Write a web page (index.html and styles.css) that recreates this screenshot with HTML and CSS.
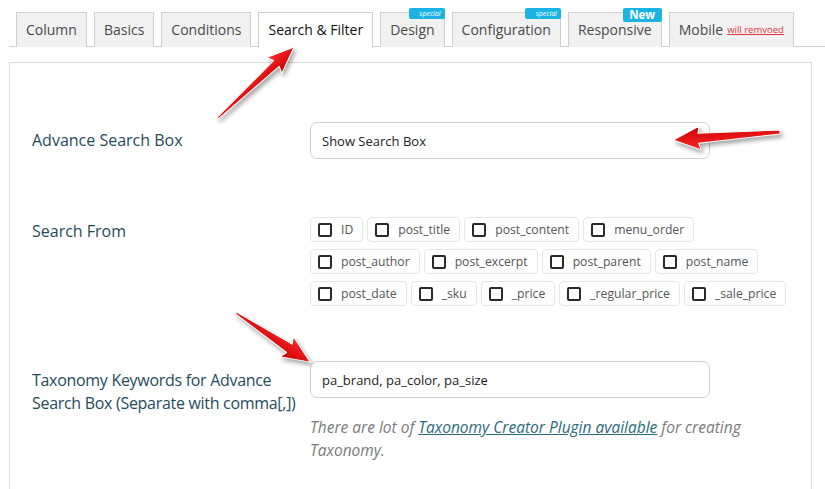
FILE: index.html
```html
<!DOCTYPE html>
<html>
<head>
<meta charset="utf-8">
<link rel="stylesheet" href="styles.css">
</head>
<body>
<div class="page">
  <nav class="tabs">
    <div class="tab">Column</div>
    <div class="tab">Basics</div>
    <div class="tab">Conditions</div>
    <div class="tab active">Search &amp; Filter</div>
    <div class="tab">Design<span class="badge small">special</span></div>
    <div class="tab">Configuration<span class="badge small">special</span></div>
    <div class="tab">Responsive<span class="badge new">New</span></div>
    <div class="tab">Mobile <a class="removed">will remvoed</a></div>
  </nav>

  <section class="panel">
    <div class="row row-select">
      <div class="label">Advance Search Box</div>
      <div class="control"><div class="select">Show Search Box</div></div>
    </div>

    <div class="row row-checks">
      <div class="label">Search From</div>
      <div class="control chips">
        <div class="chip-row">
          <label class="chip"><span class="box"></span>ID</label>
          <label class="chip"><span class="box"></span>post_title</label>
          <label class="chip"><span class="box"></span>post_content</label>
          <label class="chip"><span class="box"></span>menu_order</label>
        </div>
        <div class="chip-row">
          <label class="chip"><span class="box"></span>post_author</label>
          <label class="chip"><span class="box"></span>post_excerpt</label>
          <label class="chip"><span class="box"></span>post_parent</label>
          <label class="chip"><span class="box"></span>post_name</label>
        </div>
        <div class="chip-row">
          <label class="chip"><span class="box"></span>post_date</label>
          <label class="chip"><span class="box"></span>_sku</label>
          <label class="chip"><span class="box"></span>_price</label>
          <label class="chip"><span class="box"></span>_regular_price</label>
          <label class="chip"><span class="box"></span>_sale_price</label>
        </div>
      </div>
    </div>

    <div class="row row-tax">
      <div class="label">Taxonomy Keywords for Advance<br>Search Box (Separate with comma[,])</div>
      <div class="control">
        <div class="input">pa_brand, pa_color, pa_size</div>
        <p class="desc">There are lot of <a class="link">Taxonomy Creator Plugin available</a> for creating Taxonomy.</p>
      </div>
    </div>
  </section>

  <svg class="arrows" width="825" height="489" viewBox="0 0 825 489">
    <defs>
      <linearGradient id="rg" x1="0" y1="0" x2="0" y2="1">
        <stop offset="0" stop-color="#ff2a2a"/>
        <stop offset="1" stop-color="#c40000"/>
      </linearGradient>
    </defs>
    <g transform="translate(218 118) rotate(-43)">
      <polygon class="arr" points="0,-1 80,-4 77,-11 104,0 77,11 80,4 0,1"/>
    </g>
    <g transform="translate(780 132) rotate(175.7)">
      <polygon class="arr" points="0,-2 82,-5 80,-12 107,0 80,12 82,5 0,2"/>
    </g>
    <g transform="translate(236 313) rotate(33.5)">
      <polygon class="arr" points="0,-1 64,-5 61,-12 89,0 61,12 64,5 0,1"/>
    </g>
  </svg>
</div>
</body>
</html>
```

FILE: styles.css
```css
* { box-sizing: border-box; }
html, body { margin: 0; padding: 0; background: #fff; }
body {
  font-family: "Open Sans", "Noto Sans", sans-serif;
  color: #333;
  width: 825px;
  height: 489px;
  overflow: hidden;
}
.page { position: relative; width: 825px; height: 489px; }

.tabs {
  display: flex;
  gap: 7px;
  margin: 0 0 0 9px;
  padding: 12px 0 0 7px;
  border-bottom: 1px solid #cfcfcf;
  height: 47px;
}
.tab {
  position: relative;
  height: 35px;
  padding: 0 9px 2px;
  display: flex;
  align-items: center;
  background: #f1f1f1;
  border: 1px solid #cfcfcf;
  border-bottom: none;
  font-size: 14px;
  font-weight: 400;
  color: #4a4a4a;
  white-space: nowrap;
}
.tab.active {
  background: #fff;
  color: #111;
  height: 36px;
  padding-bottom: 3px;
  margin-bottom: -1px;
}
.badge {
  position: absolute;
  right: -1px;
  top: -5px;
  background: #1bb3e3;
  color: #fff;
  border-radius: 2px;
  line-height: 1;
}
.badge.small {
  font-size: 7px;
  font-style: italic;
  font-weight: 400;
  padding: 2px 4px 2px 7px;
  width: 36px;
  text-align: right;
  height: 11px;
}
.badge.new {
  font-size: 11.5px;
  font-weight: 700;
  padding: 1px 6px 1px;
  height: 14px;
  width: 39px;
  text-align: center;
}
.removed {
  color: #e0343c;
  text-decoration: underline;
  font-size: 9.5px;
  font-weight: 400;
  margin-left: 4px;
}

.panel {
  margin: 15px 13px 0 9px;
  border: 1px solid #dcdcdc;
  border-bottom: none;
  padding: 59px 0 40px 22px;
  height: 440px;
}
.row {
  display: grid;
  grid-template-columns: 278px 400px;
}
.label {
  font-size: 16px;
  color: #1f4b5a;
  line-height: 23px;
}
.row-select { align-items: center; }
.select, .input {
  height: 37px;
  border: 1px solid #d0d0d0;
  border-radius: 7px;
  display: flex;
  align-items: center;
  padding-left: 11px;
  font-size: 13px;
  color: #222;
}

.row-checks { margin-top: 58px; }
.row-checks .label { padding-top: 3px; }
.chips {
  display: flex;
  flex-direction: column;
  gap: 7px;
  width: 500px;
}
.chip-row {
  display: flex;
  gap: 4px;
}
.chip {
  display: flex;
  align-items: center;
  height: 25px;
  border: 1px solid #e6e6e6;
  border-radius: 4px;
  padding: 0 9px 0 7px;
  font-size: 12.2px;
  color: #555;
}
.box {
  width: 14px;
  height: 14px;
  border: 2px solid #2a2a2a;
  border-radius: 2px;
  margin-right: 9px;
}

.row-tax { margin-top: 55px; }
.row-tax .label {
  padding-top: 8px;
  width: 300px;
  white-space: nowrap;
  letter-spacing: -0.3px;
}
.desc {
  margin: 18px 0 0;
  font-size: 15.5px;
  line-height: 23px;
  font-style: italic;
  color: #7a7a7a;
  width: 460px;
}
.link {
  color: #2a6a7a;
  text-decoration: underline;
}

.arrows {
  position: absolute;
  left: 0;
  top: 0;
  pointer-events: none;
  filter: drop-shadow(2px 3px 2px rgba(0,0,0,0.35));
}
.arr {
  fill: url(#rg);
  stroke: #fff;
  stroke-width: 1;
  stroke-linejoin: round;
}
```
